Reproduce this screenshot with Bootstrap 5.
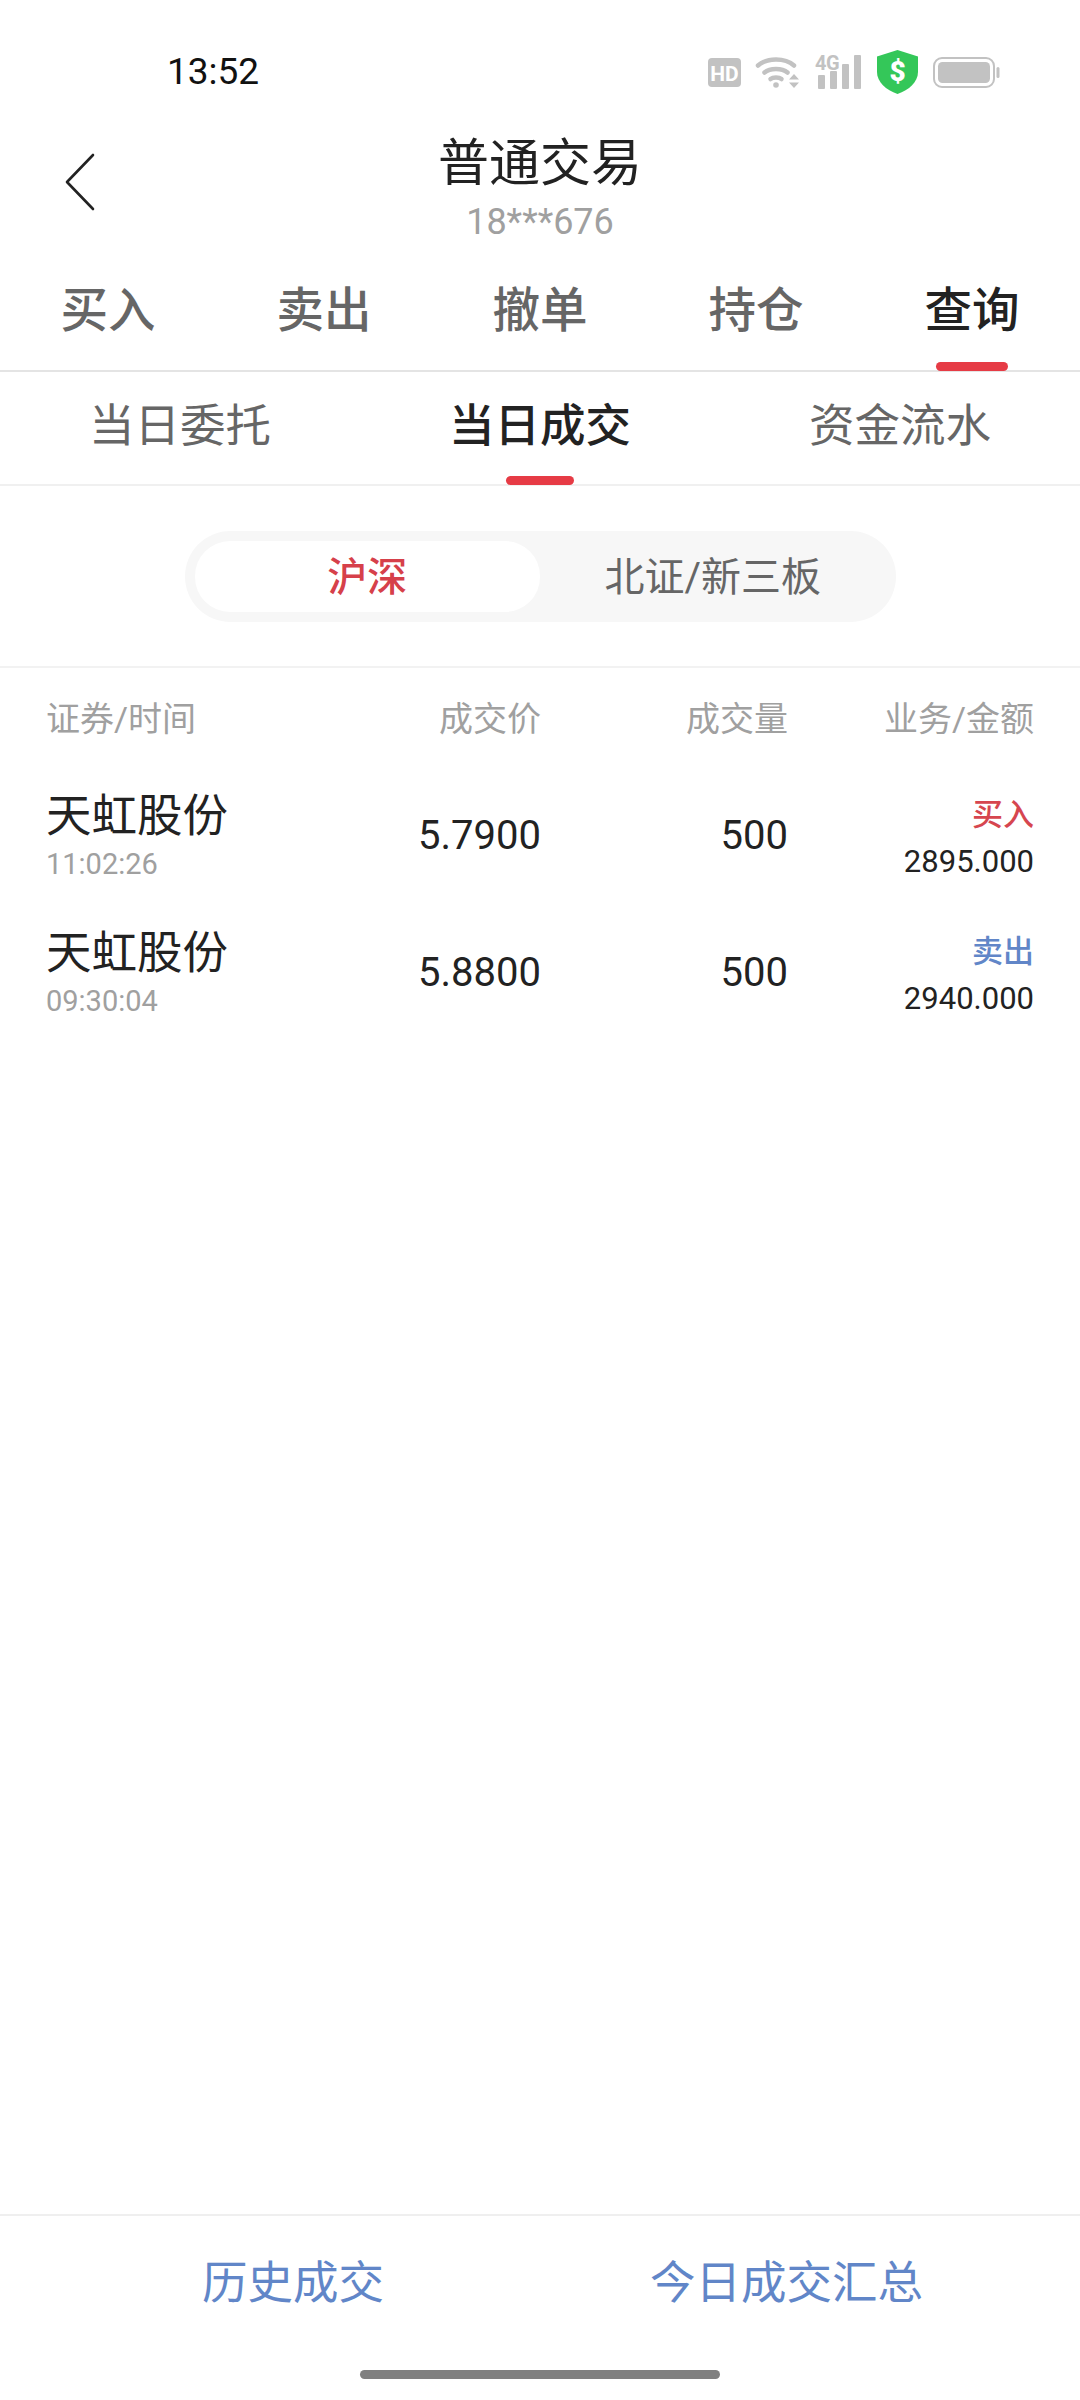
<!DOCTYPE html>
<html lang="zh-CN">
<head>
  <meta charset="UTF-8" />
  <meta name="viewport" content="width=device-width, initial-scale=1" />
  <title>普通交易</title>
  <link href="https://cdn.jsdelivr.net/npm/bootstrap@5.3.2/dist/css/bootstrap.min.css" rel="stylesheet" />
  <style>
    body {
      background-color: #fff;
      font-family: Roboto, "Noto Sans CJK SC", sans-serif;
      color: #222;
    }
    .screen { width: 1080px; height: 2400px; }
    .status-bar { height: 110px; padding: 34px 80px 0 167px; }
    .clock { font-size: 37px; color: #111; }
    .status-icons { gap: 15px; }
    .status-icons svg { display: block; overflow: visible; }
    .title-bar { height: 140px; }
    .back-btn { left: 64px; top: 42px; }
    .page-title { font-size: 51px; line-height: 60px; color: #222; margin-top: 24px; }
    .page-sub { font-size: 36px; line-height: 44px; color: #a0a0a0; margin-top: 6px; }
    .tabs-main { height: 122px; border-bottom: 2px solid #e4e4e4; }
    .tabs-sub { height: 114px; border-bottom: 2px solid #f0f0f0; }
    .tab-cell { flex: 1 1 0; color: #666; }
    .tabs-main .tab-cell { font-size: 47.5px; font-weight: 500; padding-top: 3px; }
    .tabs-sub .tab-cell { font-size: 45.5px; padding-bottom: 1px; }
    .tab-cell.is-on { color: #222; }
    .tabs-sub .tab-cell.is-on { font-weight: 500; }
    .tab-cell.is-on::after {
      content: "";
      position: absolute;
      left: 50%;
      bottom: -1px;
      transform: translateX(-50%);
      height: 9px;
      border-radius: 5px;
      background-color: #e63b45;
    }
    .tabs-main .tab-cell.is-on::after { width: 72px; }
    .tabs-sub .tab-cell.is-on::after { width: 68px; }
    .seg-wrap { height: 182px; border-bottom: 2px solid #f2f2f2; padding-top: 1px; }
    .seg-box { width: 711px; height: 91px; padding: 10px; background-color: #f7f7f7; border-radius: 46px; }
    .seg-item { width: 346px; font-size: 40px; color: #666; border-radius: 35px; padding-top: 2px; }
    .seg-item.is-on { background-color: #fff; color: #d6404a; font-weight: 500; }
    .trade-grid { display: grid; grid-template-columns: 247px 248px 247px 246px; padding: 0 46px; }
    .trade-head { height: 100px; padding-top: 2px; font-size: 34px; color: #a0a0a0; }
    .trade-line { height: 136.5px; margin-top: -1px; margin-bottom: 1px; color: #222; }
    .name-cell { padding-top: 4px; }
    .side-cell { padding-top: 6px; }
    .stock-name { font-size: 45.5px; line-height: 56px; color: #222; margin-top: -4px; }
    .stock-time { font-size: 29px; line-height: 34px; color: #a0a0a0; margin-top: 2px; }
    .num-cell { font-size: 40px; padding-top: 2px; }
    .side-tag { font-size: 31px; line-height: 40px; font-weight: 500; }
    .side-buy { color: #d6464f; }
    .side-sell { color: #6186c8; }
    .amount { font-size: 31px; line-height: 38px; margin-top: 8px; color: #222; }
    .foot-bar { height: 186px; border-top: 2px solid #efefef; padding-left: 202px; padding-top: 38px; gap: 266px; }
    .foot-link { font-size: 45.5px; line-height: 60px; color: #6186c8; }
    .home-bar { left: 360px; bottom: 21px; width: 360px; height: 9px; border-radius: 5px; background-color: #808080; }
  </style>
</head>
<body>
  <div class="screen d-flex flex-column position-relative overflow-hidden">

    <!-- Status bar -->
    <div class="status-bar d-flex align-items-center justify-content-between flex-shrink-0">
      <span class="clock">13:52</span>
      <div class="status-icons d-flex align-items-center">
        <svg width="33" height="29" viewBox="0 0 33 29">
          <rect width="33" height="29" rx="4" fill="#c2c2c2" />
          <text x="16.5" y="22.5" text-anchor="middle" font-family="Roboto" font-weight="700" font-size="21" fill="#fff">HD</text>
        </svg>
        <svg width="44" height="34" viewBox="0 0 44 34" fill="none" stroke="#c2c2c2" stroke-width="4.5" stroke-linecap="round">
          <path d="M2 10.5C11 2.5 29 2.5 38 10.5" />
          <path d="M8.5 17.5C14 12.8 26 12.8 31.5 17.5" />
          <path d="M14.5 24C17 22 23 22 25.5 24" />
          <circle cx="20" cy="30" r="2.8" fill="#c2c2c2" stroke="none" />
          <path d="M33 24.5h10l-5-5.5zM33 27.5h10l-5 5.5z" fill="#c2c2c2" stroke="none" />
        </svg>
        <svg width="47" height="34" viewBox="0 0 47 34" fill="#c2c2c2">
          <text x="0" y="15" font-family="Roboto" font-weight="700" font-size="20" letter-spacing="-0.5" fill="#c2c2c2">4G</text>
          <rect x="3" y="20" width="7" height="14" rx="1" />
          <rect x="15" y="16" width="7" height="18" rx="1" />
          <rect x="27" y="9" width="7" height="25" rx="1" />
          <rect x="39" y="0" width="7" height="34" rx="1" />
        </svg>
        <svg width="41" height="44" viewBox="0 0 41 44">
          <path d="M20.5 0L41 6.5V22C41 32 32 40 20.5 44C9 40 0 32 0 22V6.5Z" fill="#34c759" />
          <text x="20.5" y="31" text-anchor="middle" font-family="Roboto" font-weight="900" font-size="28" fill="#fff">$</text>
        </svg>
        <svg width="67" height="31" viewBox="0 0 67 31">
          <rect x="1" y="1" width="60" height="29" rx="8" fill="none" stroke="#c2c2c2" stroke-width="2" />
          <rect x="5" y="5" width="52" height="21" rx="4.5" fill="#c2c2c2" />
          <rect x="63.5" y="10" width="3" height="11" rx="1.5" fill="#c2c2c2" />
        </svg>
      </div>
    </div>

    <!-- Title -->
    <div class="title-bar position-relative text-center flex-shrink-0">
      <svg class="back-btn position-absolute" width="32" height="60" viewBox="0 0 32 60" fill="none" stroke="#222" stroke-width="2.6" stroke-linecap="round" stroke-linejoin="round">
        <path d="M29 3L3 30L29 57" />
      </svg>
      <div class="page-title">普通交易</div>
      <div class="page-sub">18***676</div>
    </div>

    <!-- Main tabs -->
    <div class="tabs-main d-flex flex-shrink-0">
      <div class="tab-cell position-relative d-flex align-items-center justify-content-center">买入</div>
      <div class="tab-cell position-relative d-flex align-items-center justify-content-center">卖出</div>
      <div class="tab-cell position-relative d-flex align-items-center justify-content-center">撤单</div>
      <div class="tab-cell position-relative d-flex align-items-center justify-content-center">持仓</div>
      <div class="tab-cell is-on position-relative d-flex align-items-center justify-content-center">查询</div>
    </div>

    <!-- Sub tabs -->
    <div class="tabs-sub d-flex flex-shrink-0">
      <div class="tab-cell position-relative d-flex align-items-center justify-content-center">当日委托</div>
      <div class="tab-cell is-on position-relative d-flex align-items-center justify-content-center">当日成交</div>
      <div class="tab-cell position-relative d-flex align-items-center justify-content-center">资金流水</div>
    </div>

    <!-- Market switch -->
    <div class="seg-wrap d-flex align-items-center justify-content-center flex-shrink-0">
      <div class="seg-box d-flex">
        <div class="seg-item is-on d-flex align-items-center justify-content-center">沪深</div>
        <div class="seg-item d-flex align-items-center justify-content-center">北证/新三板</div>
      </div>
    </div>

    <!-- Trades -->
    <div class="flex-grow-1">
      <div class="trade-grid trade-head align-items-center">
        <div>证券/时间</div>
        <div class="text-end">成交价</div>
        <div class="text-end">成交量</div>
        <div class="text-end">业务/金额</div>
      </div>
      <div class="trade-grid trade-line align-items-center">
        <div class="name-cell">
          <div class="stock-name">天虹股份</div>
          <div class="stock-time">11:02:26</div>
        </div>
        <div class="num-cell text-end">5.7900</div>
        <div class="num-cell text-end">500</div>
        <div class="side-cell text-end">
          <div class="side-tag side-buy">买入</div>
          <div class="amount">2895.000</div>
        </div>
      </div>
      <div class="trade-grid trade-line align-items-center">
        <div class="name-cell">
          <div class="stock-name">天虹股份</div>
          <div class="stock-time">09:30:04</div>
        </div>
        <div class="num-cell text-end">5.8800</div>
        <div class="num-cell text-end">500</div>
        <div class="side-cell text-end">
          <div class="side-tag side-sell">卖出</div>
          <div class="amount">2940.000</div>
        </div>
      </div>
    </div>

    <!-- Footer -->
    <div class="foot-bar d-flex flex-shrink-0">
      <div class="foot-link">历史成交</div>
      <div class="foot-link">今日成交汇总</div>
    </div>
    <div class="home-bar position-absolute"></div>
  </div>

  <script src="https://cdn.jsdelivr.net/npm/bootstrap@5.3.2/dist/js/bootstrap.bundle.min.js"></script>
</body>
</html>
